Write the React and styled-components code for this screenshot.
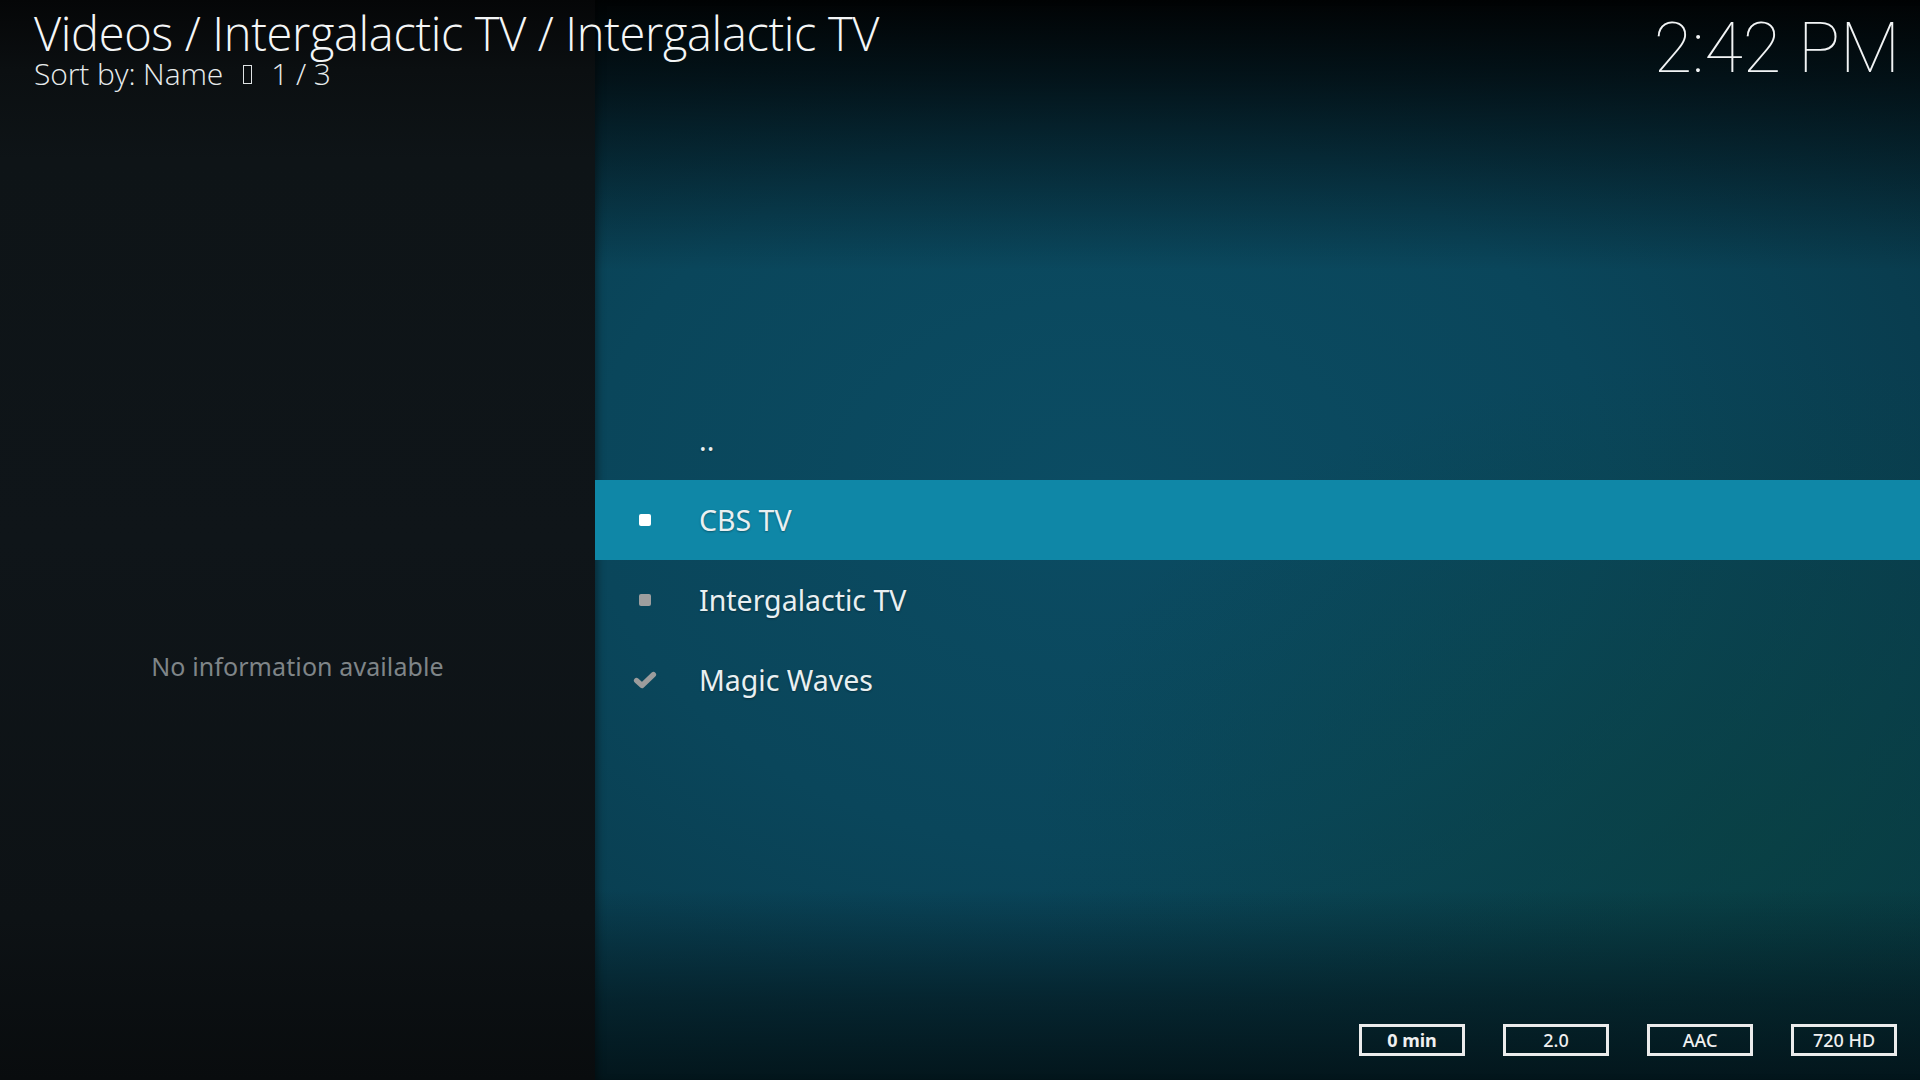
import React from 'react';
import styled, {createGlobalStyle} from 'styled-components';

const GlobalStyle = createGlobalStyle`
  html, body {
    margin: 0;
    padding: 0;
    background: #000;
    overflow: hidden;
  }
  #root {
    width: 1920px;
    height: 1080px;
  }
`;

const Screen = styled.div`
  display: grid;
  grid-template-columns: 595px 1fr;
  grid-template-rows: 1080px;
  width: 1920px;
  height: 1080px;
  font-family: "Noto Sans", "Open Sans", sans-serif;
  color: #eef3f5;
`;

const InfoPanel = styled.div`
  grid-area: 1 / 1;
  display: flex;
  align-items: center;
  justify-content: center;
  padding-top: 252px;
  box-sizing: border-box;
  background: linear-gradient(to bottom, #050607 0px, #0b0f11 70px, #0e1417 160px, #0f1519 50%, #0d1215 85%, #090c0e 100%);
`;

const NoInfo = styled.div`
  font-size: 25px;
  color: #7f8588;
  letter-spacing: 0.1px;
`;

const Browser = styled.div`
  grid-area: 1 / 2;
  padding-top: 400px;
  box-sizing: border-box;
  box-shadow: inset 6px 0 8px -4px rgba(0, 0, 0, 0.45);
  background:
    linear-gradient(to bottom, #010304 0px, rgba(1, 4, 6, 0.75) 80px, rgba(1, 4, 6, 0) 270px),
    linear-gradient(to top, #03161c 0px, rgba(3, 22, 28, 0.65) 80px, rgba(3, 22, 28, 0) 190px),
    radial-gradient(ellipse 55% 45% at 88% 78%, rgba(9, 66, 62, 0.6), rgba(9, 66, 62, 0) 100%),
    radial-gradient(ellipse 85% 75% at 38% 45%, #0b4c63 0%, #0a465b 45%, #093d4f 75%, #073442 100%);
`;

const List = styled.div`
  display: flex;
  flex-direction: column;
`;

const Row = styled.div`
  display: flex;
  align-items: center;
  height: 80px;
  background: ${p => (p.$focused ? '#0f87a7' : 'transparent')};
`;

const IconCell = styled.div`
  display: flex;
  align-items: center;
  justify-content: center;
  width: 100px;
  height: 100%;
`;

const Square = styled.div`
  width: 12px;
  height: 12px;
  border-radius: 2px;
  background: ${p => p.$color};
`;

const Label = styled.div`
  padding-left: 4px;
  font-size: 28.5px;
  color: #e9f0f2;
  text-shadow: 0 1px 2px rgba(0, 0, 0, 0.35);
  white-space: nowrap;
`;

const TopBar = styled.div`
  grid-area: 1 / 1 / 2 / 3;
  align-self: start;
  display: flex;
  justify-content: space-between;
  align-items: flex-start;
  padding: 0 20px 0 34px;
  z-index: 1;
`;

const Crumbs = styled.div`
  display: flex;
  flex-direction: column;
  font-family: "Open Sans", "Noto Sans", sans-serif;
  font-weight: 300;
`;

const Title = styled.div`
  font-size: 47px;
  line-height: 50px;
  margin-top: 8px;
  letter-spacing: -0.35px;
  color: #f4f6f7;
  white-space: nowrap;
`;

const SortLine = styled.div`
  display: flex;
  align-items: center;
  font-size: 30px;
  line-height: 34px;
  margin-top: -1px;
  letter-spacing: -0.1px;
  color: #e8eced;
  white-space: nowrap;
`;

const Tofu = styled.span`
  display: inline-block;
  width: 9px;
  height: 19px;
  box-sizing: border-box;
  border: 1.5px solid #dfe3e4;
  margin: 0 19px 0 20px;
`;

const Clock = styled.div`
  font-family: Roboto, sans-serif;
  font-weight: 100;
  font-size: 70px;
  line-height: 84px;
  margin-top: 6px;
  color: #f2f4f5;
`;

const Flags = styled.div`
  grid-area: 1 / 2;
  align-self: end;
  justify-self: end;
  display: flex;
  gap: 38px;
  margin: 0 23px 24px 0;
  z-index: 1;
`;

const Flag = styled.div`
  display: flex;
  align-items: center;
  justify-content: center;
  width: 106px;
  height: 32px;
  box-sizing: border-box;
  border: 3px solid #ececec;
  font-family: "Noto Sans", sans-serif;
  font-size: 18px;
  font-weight: ${p => (p.$bold ? 700 : 500)};
  color: #f0f0f0;
`;

function CheckIcon() {
  return (
    <svg width="24" height="18" viewBox="0 0 24 18">
      <polyline points="3.5,9.5 9,14.5 20.5,3.5" fill="none" stroke="#9c9c9c" strokeWidth="5.2" strokeLinecap="round" strokeLinejoin="round"/>
    </svg>
  );
}

const items = [
  {label: '..', icon: null},
  {label: 'CBS TV', icon: 'square', focused: true},
  {label: 'Intergalactic TV', icon: 'square'},
  {label: 'Magic Waves', icon: 'check'},
];

const flags = [
  {text: '0 min', bold: true},
  {text: '2.0'},
  {text: 'AAC'},
  {text: '720 HD'},
];

export default function App() {
  return (
    <>
      <GlobalStyle/>
      <Screen>
        <InfoPanel>
          <NoInfo>No information available</NoInfo>
        </InfoPanel>
        <Browser>
          <List>
            {items.map((item, i) => (
              <Row key={i} $focused={item.focused}>
                <IconCell>
                  {item.icon === 'square' ? <Square $color={item.focused ? '#ffffff' : '#9e9e9e'}/> : null}
                  {item.icon === 'check' ? <CheckIcon/> : null}
                </IconCell>
                <Label>{item.label}</Label>
              </Row>
            ))}
          </List>
        </Browser>
        <TopBar>
          <Crumbs>
            <Title>Videos / Intergalactic TV / Intergalactic TV</Title>
            <SortLine>Sort by: Name<Tofu/>1 / 3</SortLine>
          </Crumbs>
          <Clock>2:42 PM</Clock>
        </TopBar>
        <Flags>
          {flags.map((f, i) => (
            <Flag key={i} $bold={f.bold}>{f.text}</Flag>
          ))}
        </Flags>
      </Screen>
    </>
  );
}
